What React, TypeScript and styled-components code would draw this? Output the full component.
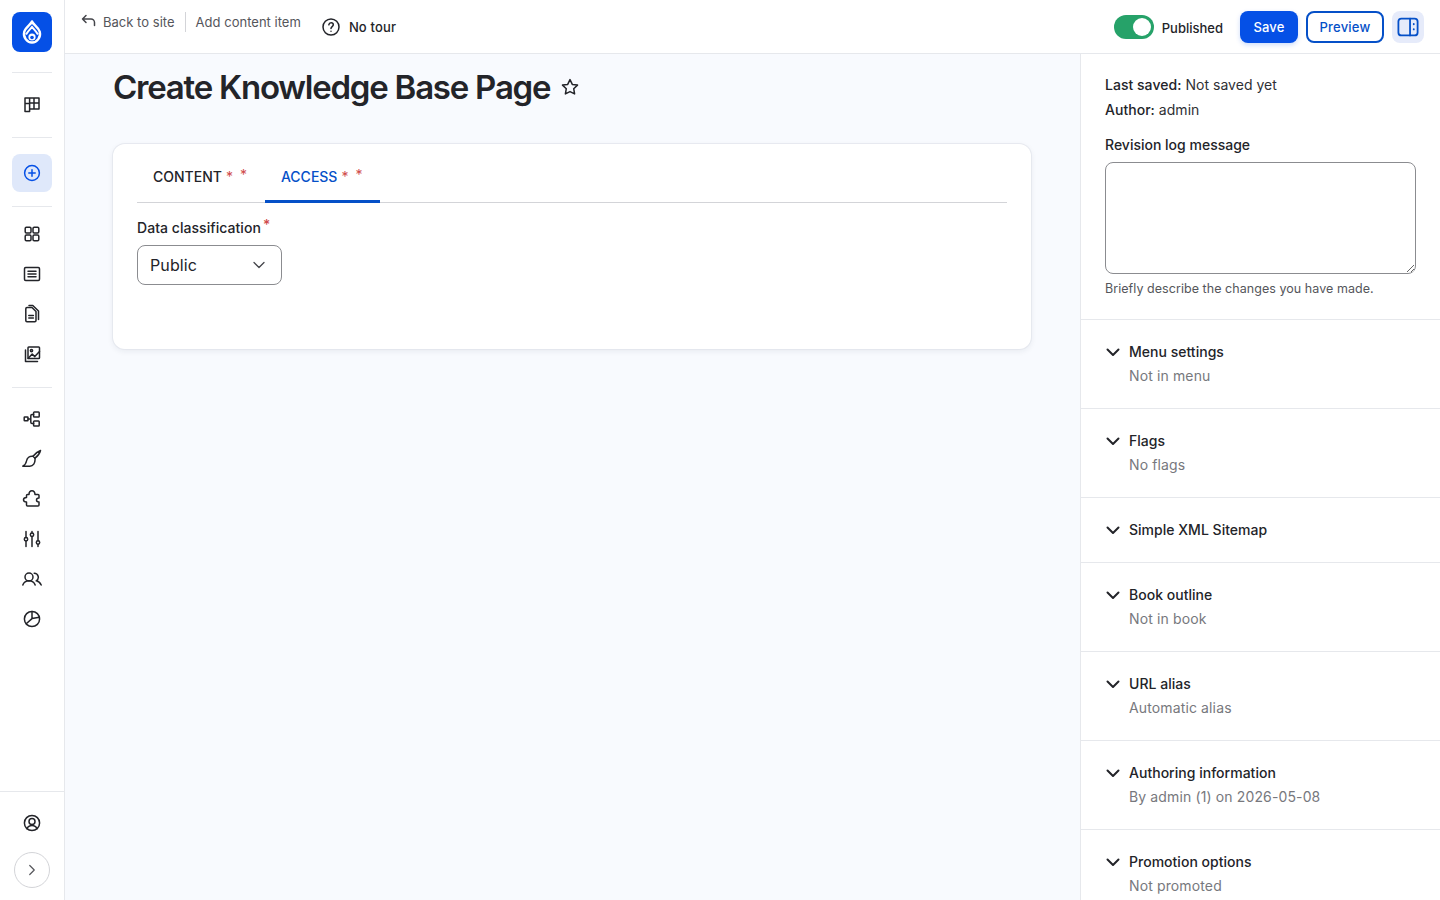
import React from "react";
import styled, { createGlobalStyle } from "styled-components";
import { ChevronDown, ChevronRight } from "lucide-react";

const GlobalStyle = createGlobalStyle`
  html, body {
    margin: 0;
    padding: 0;
    height: 100%;
    overflow: hidden;
  }
  body {
    font-family: Inter, "Liberation Sans", sans-serif;
    color: #232429;
    background: #f8fafe;
  }
  * {
    box-sizing: border-box;
  }
`;

const Shell = styled.div`
  display: grid;
  grid-template-columns: 65px 1fr;
  height: 900px;
  overflow: hidden;
`;

const Rail = styled.nav`
  display: flex;
  flex-direction: column;
  height: 900px;
  background: #fff;
  border-right: 1px solid #e6e8ec;
`;

const LogoWrap = styled.div`
  padding: 12px 12px 20px;
`;

const Logo = styled.div`
  display: flex;
  align-items: center;
  justify-content: center;
  width: 40px;
  height: 40px;
  border-radius: 8px;
  background: #0550e6;
`;

const RailGroup = styled.div<{ $top: number; $bottom: number }>`
  display: flex;
  flex-direction: column;
  margin: 0 12px;
  padding: ${(p) => p.$top}px 0 ${(p) => p.$bottom}px;
  border-top: 1px solid #e6e8ec;
`;

const RailItem = styled.a<{ $active?: boolean }>`
  display: flex;
  align-items: center;
  justify-content: center;
  height: ${(p) => (p.$active ? 38 : 40)}px;
  border-radius: 8px;
  color: ${(p) => (p.$active ? "#0550e6" : "#232429")};
  background: ${(p) => (p.$active ? "#dfe8fa" : "transparent")};
`;

const RailFooter = styled.div`
  display: flex;
  flex-direction: column;
  align-items: center;
  margin-top: auto;
  padding: 11px 0 12px;
  border-top: 1px solid #e6e8ec;
`;

const UserLink = styled.a`
  display: flex;
  align-items: center;
  justify-content: center;
  width: 40px;
  height: 40px;
  color: #232429;
`;

const ExpandButton = styled.button`
  display: flex;
  align-items: center;
  justify-content: center;
  width: 36px;
  height: 36px;
  margin-top: 9px;
  padding: 0;
  border: 1px solid #d3d4d8;
  border-radius: 50%;
  color: #55565b;
  background: #fff;
`;

const Work = styled.div`
  display: flex;
  flex-direction: column;
  min-width: 0;
  height: 900px;
`;

const TopBar = styled.header`
  display: flex;
  align-items: center;
  flex: 0 0 54px;
  padding: 0 16px;
  background: #fff;
  border-bottom: 1px solid #e6e8ec;
`;

const Crumbs = styled.div`
  display: flex;
  align-items: center;
  height: 20px;
  margin-top: -9px;
  font-size: 13px;
  letter-spacing: 0.02px;
  color: #55565b;
`;

const BackLink = styled.a`
  display: flex;
  align-items: center;
  gap: 6px;
  height: 20px;
  padding-right: 10px;
  border-right: 1px solid #d3d4d8;
  svg {
    margin-top: -3px;
    color: #44454a;
  }
`;

const CrumbText = styled.span`
  padding-left: 10px;
`;

const TourLink = styled.a`
  display: flex;
  align-items: center;
  gap: 8px;
  margin-left: 20px;
  font-size: 13px;
  font-weight: 500;
  letter-spacing: 0.15px;
  color: #232429;
`;

const TopActions = styled.div`
  display: flex;
  align-items: center;
  margin-left: auto;
`;

const Toggle = styled.span`
  position: relative;
  display: block;
  width: 40px;
  height: 24px;
  border-radius: 12px;
  background: #26a269;
  &::after {
    content: "";
    position: absolute;
    top: 3px;
    right: 3px;
    width: 18px;
    height: 18px;
    border-radius: 50%;
    background: #fff;
  }
`;

const ToggleLabel = styled.span`
  margin: 2px 17px 0 8px;
  font-size: 13px;
  font-weight: 500;
  color: #232429;
`;

const ActionButton = styled.button<{ $primary?: boolean }>`
  width: ${(p) => (p.$primary ? 58 : 78)}px;
  height: 32px;
  margin-right: 8px;
  padding: 0;
  border: ${(p) => (p.$primary ? "0" : "2px solid #0550c8")};
  border-radius: 8px;
  font-family: inherit;
  font-size: 13px;
  font-weight: 500;
  letter-spacing: 0.2px;
  color: ${(p) => (p.$primary ? "#fff" : "#0550c8")};
  background: ${(p) => (p.$primary ? "#0550e6" : "#fff")};
  box-shadow: ${(p) => (p.$primary ? "0 2px 5px rgba(5, 80, 230, 0.2)" : "none")};
`;

const PanelToggle = styled.button`
  display: flex;
  align-items: center;
  justify-content: center;
  width: 32px;
  height: 32px;
  padding: 0;
  border: 0;
  border-radius: 8px;
  color: #0550c8;
  background: #e6ebfa;
`;

const Columns = styled.div`
  display: grid;
  grid-template-columns: 1fr 360px;
  flex: 1;
  min-height: 0;
`;

const Main = styled.main`
  padding: 12px 49px 0 48px;
`;

const TitleRow = styled.div`
  display: flex;
  align-items: center;
  gap: 10px;
  height: 42px;
`;

const PageTitle = styled.h1`
  margin: 0;
  font-size: 33px;
  font-weight: 600;
  line-height: 42px;
  letter-spacing: -1.23px;
  color: #232429;
`;

const FormCard = styled.section`
  height: 205px;
  margin-top: 36px;
  padding: 0 24px;
  border-radius: 12px;
  background: #fff;
  box-shadow: 0 0 0 1px rgba(225, 228, 235, 0.7), 0 2px 6px rgba(30, 40, 70, 0.08);
`;

const Tabs = styled.div`
  display: flex;
  height: 59px;
  border-bottom: 1px solid #d3d4d8;
`;

const Tab = styled.a<{ $active?: boolean }>`
  display: flex;
  align-items: center;
  height: 59px;
  padding: 9px 18px 0 16px;
  font-size: 14px;
  font-weight: 500;
  color: ${(p) => (p.$active ? "#0550c8" : "#232429")};
  border-bottom: 3px solid ${(p) => (p.$active ? "#0550c8" : "transparent")};
`;

const TabMark = styled.span`
  margin-left: 4px;
  font-weight: 400;
  color: #cf4a4a;
  &:last-child {
    margin-left: 7px;
    margin-top: -5px;
  }
`;

const FieldLabel = styled.label`
  display: block;
  margin-top: 16px;
  font-size: 14px;
  line-height: 18px;
  font-weight: 500;
  letter-spacing: 0.05px;
  color: #232429;
`;

const Required = styled.span`
  margin-left: 2px;
  font-size: 14px;
  line-height: 0;
  vertical-align: 3px;
  color: #cf4a4a;
`;

const SelectBox = styled.div`
  display: flex;
  align-items: center;
  justify-content: space-between;
  width: 145px;
  height: 40px;
  margin-top: 8px;
  padding: 0 12px;
  border: 1px solid #8b8c90;
  border-radius: 8px;
  font-size: 16px;
  color: #232429;
  letter-spacing: 0.1px;
  svg {
    color: #44454a;
  }
`;

const Side = styled.aside`
  height: 846px;
  overflow: hidden;
  background: #fff;
  border-left: 1px solid #e6e8ec;
`;

const MetaBlock = styled.div`
  padding: 18px 24px 22px;
  border-bottom: 1px solid #e6e8ec;
`;

const MetaLine = styled.div`
  height: 25px;
  font-size: 14px;
  line-height: 25px;
  color: #2f3035;
  letter-spacing: 0.03px;
  b {
    font-weight: 500;
    color: #232429;
  }
`;

const RevisionLabel = styled.label`
  display: block;
  margin-top: 13px;
  font-size: 14px;
  font-weight: 500;
  line-height: 20px;
`;

const RevisionInput = styled.textarea`
  display: block;
  width: 311px;
  height: 112px;
  margin-top: 7px;
  border: 1px solid #8b8c90;
  border-radius: 8px;
  background: #fff;
  outline: none;
`;

const Hint = styled.div`
  margin-top: 7px;
  font-size: 12.5px;
  line-height: 16px;
  letter-spacing: 0.05px;
  color: #55565b;
`;

const Section = styled.div`
  padding: 20px 24px 21px;
  border-bottom: 1px solid #e6e8ec;
`;

const SectionHead = styled.div`
  display: flex;
  align-items: center;
  gap: 8px;
  height: 23px;
  font-size: 14px;
  font-weight: 500;
  letter-spacing: 0.02px;
  color: #232429;
  svg {
    flex: none;
  }
`;

const SectionNote = styled.div`
  height: 24px;
  padding-left: 24px;
  font-size: 14px;
  line-height: 26px;
  letter-spacing: 0.13px;
  color: #77787d;
`;

const Ico = ({ size = 20, children }: { size?: number; children: React.ReactNode }) => (
  <svg
    width={size}
    height={size}
    viewBox="0 0 20 20"
    fill="none"
    stroke="currentColor"
    strokeWidth="1.5"
    strokeLinecap="round"
    strokeLinejoin="round"
  >
    {children}
  </svg>
);

const railTop = [
  <Ico key="board">
    <path d="M3 4h4.6v13.5H3zM7.6 4H12v11H7.6zM12 4h5v11h-5zM3 9.5h4.6M7.6 9H12M12 9h5" />
  </Ico>,
];

const railContent = [
  <Ico key="grid">
    <rect x="3.2" y="3.2" width="5.8" height="5.8" rx="1.2" />
    <rect x="11" y="3.2" width="5.8" height="5.8" rx="1.2" />
    <rect x="3.2" y="11" width="5.8" height="5.8" rx="1.2" />
    <rect x="11" y="11" width="5.8" height="5.8" rx="1.2" />
  </Ico>,
  <Ico key="list">
    <rect x="2.5" y="3.5" width="15" height="13" rx="1.2" />
    <path d="M6 7.2h8M6 10h8M6 12.8h8" />
  </Ico>,
  <Ico key="files">
    <path d="M5 3.5h5l4 4v9a1.2 1.2 0 0 1-1.2 1.2H5a1.2 1.2 0 0 1-1.2-1.2V4.7A1.2 1.2 0 0 1 5 3.5z" />
    <path d="M7 1.5h3.8l5.7 5.500v8.500" />
    <path d="M6.800 11.500h4.600M6.800 14h4.600" />
  </Ico>,
  <Ico key="media">
    <rect x="6" y="3" width="11.5" height="11.5" rx="0.8" />
    <path d="M6 14.500l4.200-4.500 2.600 2.600 4.700-5.200" />
    <circle cx="9.5" cy="6.6" r="1.1" />
    <path d="M3.500 6v11.500h12" />
  </Ico>,
];

const railAdmin = [
  <Ico key="flow">
    <rect x="2.2" y="8" width="3.8" height="3.8" rx="0.6" />
    <rect x="11.6" y="3" width="5.6" height="5" rx="0.8" />
    <rect x="11.6" y="12" width="5.6" height="5" rx="0.8" />
    <path d="M6 10h2.800M11.600 5.500H10a1.200 1.200 0 0 0-1.200 1.200v6.600a1.200 1.200 0 0 0 1.200 1.200h1.600" />
  </Ico>,
  <Ico key="brush">
    <path d="M18.500 1.500c-2.800 1-5.500 3.200-7.500 5.700l2 2c2.500-2 4.800-4.700 5.500-7.700z" />
    <path d="M11 7.200C7.500 6.800 5 9 4.500 12c-.3 1.800-1.500 4-3.700 5.200h7c3.200 0 5.700-3 5.200-8" />
  </Ico>,
  <Ico key="puzzle">
    <path d="M5.500 17H16a1 1 0 0 0 1-1v-3c-1.300 0-2.500-.8-2.500-2s1.200-2 2.500-2V6.500a1 1 0 0 0-1-1h-3c0-2.200-1.300-3.800-3-3.800S7 3.300 7 5.500H5.500a1 1 0 0 0-1 1v2c-1.700 0-3 1-3 2.300s1.300 2.300 3 2.300V16a1 1 0 0 0 1 1z" />
  </Ico>,
  <Ico key="sliders">
    <path d="M4 2.500v6M4 12v5.500M10 2.500V4M10 7.600v9.900M16 2.500v9.200M16 15.200v2.300" />
    <circle cx="4" cy="10.2" r="1.7" />
    <circle cx="10" cy="5.8" r="1.7" />
    <circle cx="16" cy="13.5" r="1.7" />
  </Ico>,
  <Ico key="people">
    <circle cx="7" cy="8" r="4" />
    <path d="M.8 16c1-2.700 3.500-4.200 6.200-4.200s5.200 1.500 6.200 4.200" />
    <path d="M12.200 4.300a4 4 0 0 1 2 7.500c2.200.3 4 2 5 4.200" />
  </Ico>,
  <Ico key="pie">
    <circle cx="10" cy="10" r="7.6" />
    <path d="M10 2.400v7.200l-5.800 5.200M10 9.600l7.400-1.400" />
  </Ico>,
];

const sections = [
  { title: "Menu settings", note: "Not in menu" },
  { title: "Flags", note: "No flags" },
  { title: "Simple XML Sitemap" },
  { title: "Book outline", note: "Not in book" },
  { title: "URL alias", note: "Automatic alias" },
  { title: "Authoring information", note: "By admin (1) on 2026-05-08" },
  { title: "Promotion options", note: "Not promoted" },
];

const App = () => {
  return (
    <>
      <GlobalStyle />
      <Shell>
        <Rail>
          <LogoWrap>
            <Logo>
              <svg width="22" height="26" viewBox="0 0 22 26" fill="none">
                <path
                  d="M11 2.500c1 3 6.400 5.600 7.800 10.400C20 18 16.200 23.500 11 23.500S2 18 3.200 12.900C4.600 8.100 10 5.500 11 2.500z"
                  stroke="#fff"
                  strokeWidth="2.4"
                  strokeLinejoin="round"
                />
                <path d="M5 15.500c1.500-2.800 3.800-5 6-7.500 2.200 2.500 4.500 4.700 6 7.500" stroke="#fff" strokeWidth="2" />
                <circle cx="11" cy="18" r="3.6" fill="#fff" />
                <circle cx="11" cy="18.5" r="1.8" fill="#0550e6" />
              </svg>
            </Logo>
          </LogoWrap>
          <RailGroup $top={11} $bottom={13}>
            {railTop.map((icon, i) => (
              <RailItem key={i}>{icon}</RailItem>
            ))}
          </RailGroup>
          <RailGroup $top={16} $bottom={14}>
            <RailItem $active>
              <Ico>
                <circle cx="10" cy="10" r="7.4" />
                <path d="M10 6.800v6.400M6.800 10h6.400" />
              </Ico>
            </RailItem>
          </RailGroup>
          <RailGroup $top={7} $bottom={13}>
            {railContent.map((icon, i) => (
              <RailItem key={i}>{icon}</RailItem>
            ))}
          </RailGroup>
          <RailGroup $top={11} $bottom={0}>
            {railAdmin.map((icon, i) => (
              <RailItem key={i}>{icon}</RailItem>
            ))}
          </RailGroup>
          <RailFooter>
            <UserLink>
              <Ico>
                <circle cx="10" cy="10" r="7.6" />
                <circle cx="10" cy="8.4" r="3" />
                <path d="M5 15.800c.8-2 2.700-3.200 5-3.200s4.200 1.200 5 3.200" />
              </Ico>
            </UserLink>
            <ExpandButton>
              <ChevronRight size={18} strokeWidth={1.6} />
            </ExpandButton>
          </RailFooter>
        </Rail>
        <Work>
          <TopBar>
            <Crumbs>
              <BackLink>
                <svg width="16" height="14" viewBox="0 0 16 14" fill="none" stroke="currentColor" strokeWidth="1.5" strokeLinecap="round" strokeLinejoin="round">
                  <path d="M5 1.500L1.500 5 5 8.500M1.500 5H10a3.500 3.500 0 0 1 3.500 3.500v3" />
                </svg>
                Back to site
              </BackLink>
              <CrumbText>Add content item</CrumbText>
            </Crumbs>
            <TourLink>
              <Ico size={20}>
                <circle cx="10" cy="10" r="8" />
                <path d="M7.800 7.800c.2-1.200 1.100-2 2.300-2 1.300 0 2.200.9 2.200 2 0 1.900-2.300 1.800-2.300 3.700" />
                <path d="M10 14.200v.1" />
              </Ico>
              No tour
            </TourLink>
            <TopActions>
              <Toggle />
              <ToggleLabel>Published</ToggleLabel>
              <ActionButton $primary>Save</ActionButton>
              <ActionButton>Preview</ActionButton>
              <PanelToggle>
                <Ico size={24}>
                  <rect x="2" y="3" width="16" height="14" rx="2.5" />
                  <path d="M11.700 3v14" />
                  <path d="M14.800 7.500v.3M14.800 11.700v.3" />
                </Ico>
              </PanelToggle>
            </TopActions>
          </TopBar>
          <Columns>
            <Main>
              <TitleRow>
                <PageTitle>Create Knowledge Base Page</PageTitle>
                <Ico>
                  <path d="M10 2.600l2.300 4.800 5.200.7-3.800 3.600.9 5.200L10 14.600l-4.600 2.300.9-5.200-3.800-3.600 5.200-.7z" />
                </Ico>
              </TitleRow>
              <FormCard>
                <Tabs>
                  <Tab>
                    CONTENT<TabMark>*</TabMark>
                    <TabMark>*</TabMark>
                  </Tab>
                  <Tab $active>
                    ACCESS<TabMark>*</TabMark>
                    <TabMark>*</TabMark>
                  </Tab>
                </Tabs>
                <FieldLabel>
                  Data classification<Required>*</Required>
                </FieldLabel>
                <SelectBox>
                  Public
                  <ChevronDown size={20} strokeWidth={1.5} />
                </SelectBox>
              </FormCard>
            </Main>
            <Side>
              <MetaBlock>
                <MetaLine>
                  <b>Last saved:</b> Not saved yet
                </MetaLine>
                <MetaLine>
                  <b>Author:</b> admin
                </MetaLine>
                <RevisionLabel>Revision log message</RevisionLabel>
                <RevisionInput />
                <Hint>Briefly describe the changes you have made.</Hint>
              </MetaBlock>
              {sections.map((s) => (
                <Section key={s.title}>
                  <SectionHead>
                    <svg width="16" height="16" viewBox="0 0 16 16" fill="none" stroke="currentColor" strokeWidth="2" strokeLinecap="round" strokeLinejoin="round">
                      <path d="M2.500 5.500L8 11l5.500-5.500" />
                    </svg>
                    {s.title}
                  </SectionHead>
                  {s.note && <SectionNote>{s.note}</SectionNote>}
                </Section>
              ))}
            </Side>
          </Columns>
        </Work>
      </Shell>
    </>
  );
};

export default App;
